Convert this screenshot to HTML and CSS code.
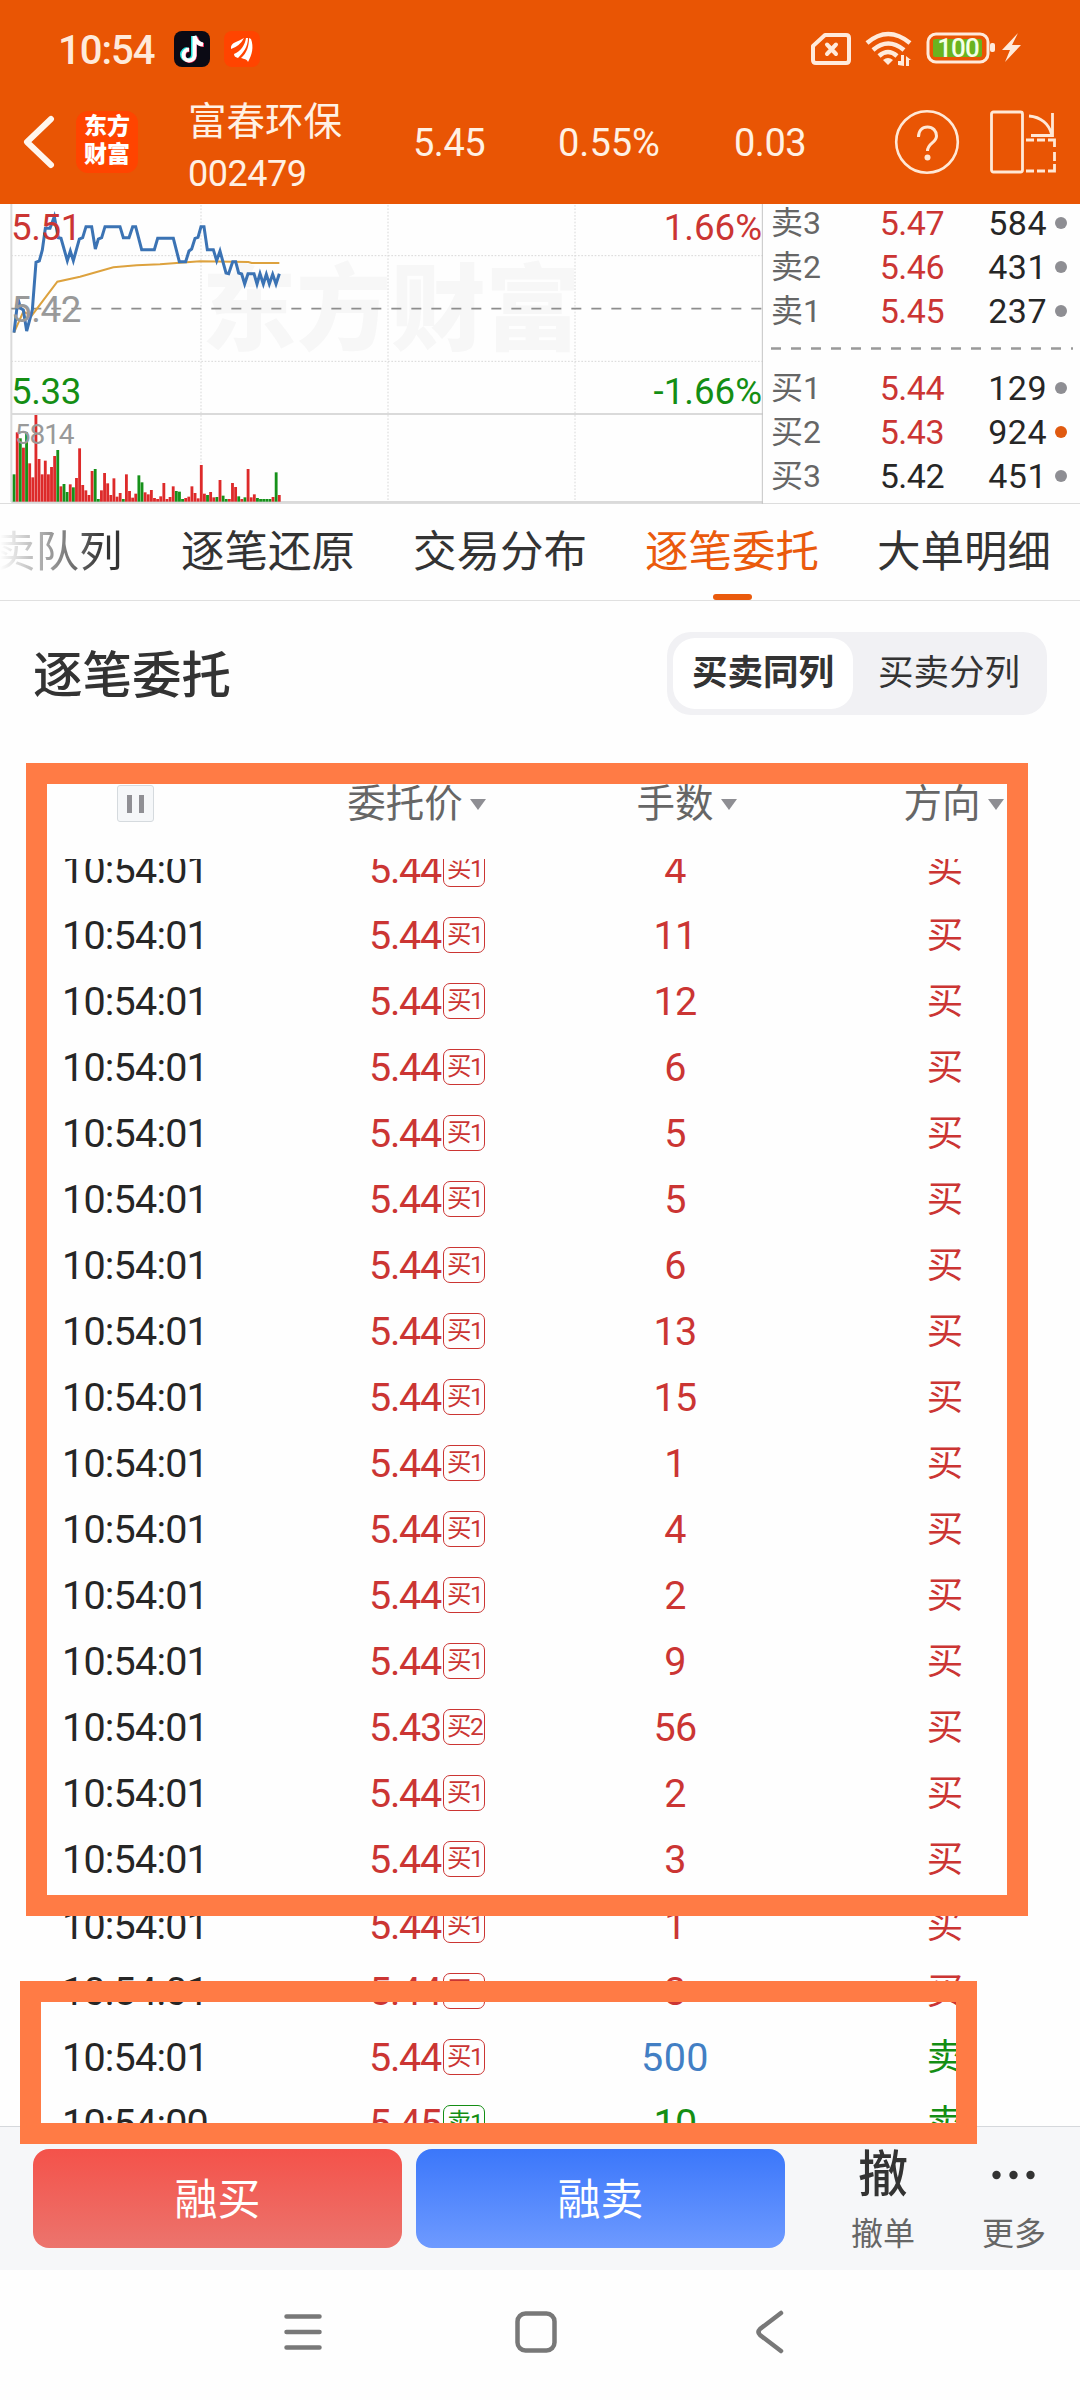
FILE: index.html
```html
<!DOCTYPE html>
<html lang="zh-CN">
  <head>
    <meta charset="UTF-8">
    <title>富春环保 002479</title>
    <link rel="stylesheet" href="styles.css">
  </head>
  <body>
    <header class="header">
      <div class="status">
        <span class="clock">10:54</span>
        <svg class="app-icon" viewBox="0 0 36 36">
          <rect width="36" height="36" rx="8" fill="#0b0a14"/>
          <path d="M19 5v19a5.500 5.500 0 1 1-5.500-6M20 5c1 5 4 8 8 8" fill="none" stroke="#25e3e0" stroke-width="4"/>
          <path d="M21 6v19a5.500 5.500 0 1 1-5.500-6M22 6c1 5 4 8 8 8" fill="none" stroke="#f5305c" stroke-width="4"/>
          <path d="M20.500 5v19.500a5.500 5.500 0 1 1-5.500-6M20.500 5c1 5 4 8 8.500 8.500" fill="none" stroke="#fff" stroke-width="4"/>
        </svg>
        <svg class="app-icon" viewBox="0 0 36 36">
          <rect width="36" height="36" rx="8" fill="#ff4400"/>
          <path d="M7 18C6 11 14 11 20 7q-4 8-13 11zM10 23c7-3 11-9 12-16l2 0c0 9-5 15-10 20-3-1-4-2-4-4zM17 27c6-5 8-12 8-20l2 1c3 8 1 16-3 23-1-3-4-3-7-4z" fill="#fff"/>
        </svg>
        <svg class="status-icons" viewBox="0 0 216 40">
          <g fill="none" stroke="#ffeadb" stroke-width="4">
            <path d="M15 6h21q3 0 3 3v22q0 3-3 3H6q-3 0-3-3V17z" stroke-linejoin="round"/>
            <path d="M17 15.500l9 9.500M26 15.500l-9 9.500" stroke-linecap="round"/>
            <path d="M57 14q21-18 43 0M63 21q15-13 31 0M69 27q9-8 18 0" stroke-width="4.500"/>
            <rect x="118" y="5" width="60" height="28" rx="8" stroke-width="3"/>
          </g>
          <path d="M73 31q5-4 10 0l-5 5z" fill="#ffeadb"/>
          <path d="M88 36v-4h3v-6h3v11zM96 37V27l5 4h-2v6z" fill="#ffeadb"/>
          <rect x="123" y="10" width="49" height="18" rx="2" fill="#6ab31f"/>
          <rect x="180" y="14" width="5" height="9" rx="2" fill="#ffeadb"/>
          <path d="M208 4l-16 17h8l-5 12 16-17h-9z" fill="#ffeadb"/>
          <text x="148" y="28" class="battery-text">100</text>
        </svg>
      </div>
      <div class="title-bar">
        <svg class="back" viewBox="0 0 34 54"><path d="M29 4L5 27l24 23" fill="none" stroke="#fff6ee" stroke-width="6" stroke-linecap="round" stroke-linejoin="round"/></svg>
        <div class="logo">东方<br>财富</div>
        <div class="stock">
          <div class="stock-name">富春环保</div>
          <div class="stock-code">002479</div>
        </div>
        <span class="quote price">5.45</span>
        <span class="quote percent">0.55%</span>
        <span class="quote change">0.03</span>
        <svg class="help" viewBox="0 0 66 66">
          <circle cx="33" cy="33" r="30.800" fill="none" stroke="#ffe8d6" stroke-width="2.600"/>
          <path d="M24.500 28c0-6 3.500-10 9-10s9 4 9 9c0 7-9 7-9 15" fill="none" stroke="#ffe8d6" stroke-width="3"/>
          <circle cx="33.500" cy="48.500" r="3" fill="#ffe8d6"/>
        </svg>
        <svg class="rotate" viewBox="0 0 68 66" fill="none" stroke="#ffe8d6" stroke-width="2.800">
          <rect x="1.500" y="3" width="31" height="60" rx="2"/>
          <path d="M39 7c12 1 20 8 22.500 18M62.500 4v22.500H41"/>
          <path d="M36 31h8M47 31h8M58 31h6.500v7M64.500 43v9M64.500 55v7H58M36 62h8M47 62h8"/>
        </svg>
      </div>
    </header>

    <section class="market">
      <svg class="chart" viewBox="0 27 2289 900">
        <text class="watermark" x="605" y="443">东方财富</text>
        <g class="grid">
          <path d="M34 182H2289M34 499H2289M603 30V918M1164 30V918M1725 30V918"/>
        </g>
        <path class="frame-line" d="M34 27V921M34 657H2289M34 921H2289"/>
        <path class="edge-line" d="M2287 27V927"/>
        <path class="mid-line" d="M34 341H2289"/>
        <g id="volume"></g>
        <text class="volume-text" x="44" y="746">5814</text>
        <polyline class="average" points="42,413 70,350 95,362 172,260 240,245 340,217 410,211 480,208 540,203 600,199 745,201 755,204 838,204"/>
        <polyline class="minute" points="42,413 54,312 62,340 70,345 80,408 97,345 108,202 118,198 127,165 136,100 150,100 163,65 175,128 183,130 202,197 211,168 220,197 238,132 248,128 258,95 275,95 286,162 295,132 305,128 315,95 360,95 370,128 387,128 398,95 407,95 425,164 463,164 473,130 520,130 538,200 557,200 567,168 575,162 585,130 594,127 603,95 612,95 622,164 640,164 650,197 660,168 678,234 686,236 698,200 707,200 716,234 725,237 734,267 744,236 762,236 771,267 780,236 790,267 799,238 808,267 818,238 828,267 838,236"/>
        <text class="chart-text up" x="33" y="135">5.51</text>
        <text class="chart-text flat" x="33" y="380">5.42</text>
        <text class="chart-text down" x="33" y="627">5.33</text>
        <text class="chart-text up end" x="2286" y="135">1.66%</text>
        <text class="chart-text down end" x="2286" y="627">-1.66%</text>
      </svg>
      <div class="book">
        <div class="level"><span>卖3</span><b class="up">5.47</b><i>584</i><em></em></div>
        <div class="level"><span>卖2</span><b class="up">5.46</b><i>431</i><em></em></div>
        <div class="level"><span>卖1</span><b class="up">5.45</b><i>237</i><em></em></div>
        <svg class="book-line" viewBox="0 0 302 33"><path d="M0 15.500H302" stroke="#999" stroke-width="2.500" stroke-dasharray="10 10"/></svg>
        <div class="level"><span>买1</span><b class="up">5.44</b><i>129</i><em></em></div>
        <div class="level"><span>买2</span><b class="up">5.43</b><i>924</i><em class="hot"></em></div>
        <div class="level"><span>买3</span><b>5.42</b><i>451</i><em></em></div>
      </div>
    </section>

    <nav class="tabs">
      <a class="faded">卖队列</a>
      <a>逐笔还原</a>
      <a>交易分布</a>
      <a class="active">逐笔委托</a>
      <a>大单明细</a>
    </nav>

    <div class="section-head">
      <h2>逐笔委托</h2>
      <div class="switch">
        <span class="on">买卖同列</span>
        <span>买卖分列</span>
      </div>
    </div>

    <div class="table-head">
      <div><span class="pause"></span></div>
      <div><span class="sort">委托价</span></div>
      <div><span class="sort">手数</span></div>
      <div><span class="sort direction">方向</span></div>
    </div>
    <div class="list"><div id="rows"></div></div>

    <div class="actions">
      <button class="buy">融买</button>
      <button class="sell">融卖</button>
      <div class="action cancel"><strong>撤</strong><span>撤单</span></div>
      <div class="action more">
        <svg viewBox="0 0 44 50"><circle cx="4.500" cy="25" r="4.200"/><circle cx="21.500" cy="25" r="4.200"/><circle cx="38.500" cy="25" r="4.200"/></svg>
        <span>更多</span>
      </div>
    </div>

    <div class="system-nav">
      <svg viewBox="0 0 44 44"><path d="M5.500 6.500h33M5.500 22h33M5.500 37.500h33"/></svg>
      <svg viewBox="0 0 44 44"><rect x="3.500" y="3.500" width="37" height="37" rx="8"/></svg>
      <svg viewBox="0 0 44 44"><path d="M34 3L13 19q-3 3 0 6l21 16"/></svg>
    </div>

    <div class="mark mark-top"></div>
    <div class="mark mark-bottom"></div>
    <script src="script.js"></script>
  </body>
</html>
```
FILE: styles.css
```css
body {
  margin: 0;
  width: 1080px;
  height: 2400px;
  position: relative;
  overflow: hidden;
  background: #fefefe;
  color: #262626;
  font-family: Roboto, "Noto Sans CJK SC", sans-serif;
}

.header {
  height: 204px;
  background: #e95504;
  color: #fff1e4;
}

.status {
  display: flex;
  align-items: center;
  height: 98px;
  padding-left: 58px;
}

.clock {
  width: 116px;
  padding-top: 2px;
  font-size: 40px;
  font-weight: 500;
  letter-spacing: -1px;
  color: #ffeadb;
}

.app-icon {
  width: 36px;
  height: 36px;
  margin-right: 14px;
}

.status-icons {
  width: 216px;
  height: 40px;
  margin-left: 536px;
}

.battery-text {
  font-size: 26px;
  font-weight: 500;
  letter-spacing: -1px;
  fill: #f4ffe6;
  text-anchor: middle;
}

.title-bar {
  display: flex;
  align-items: center;
  height: 88px;
}

.back {
  width: 34px;
  height: 54px;
  margin-left: 22px;
}

.logo {
  width: 62px;
  height: 62px;
  margin-left: 20px;
  border-radius: 12px;
  background: #ff4400;
  box-sizing: border-box;
  padding-top: 2px;
  color: #fff;
  font-size: 23px;
  font-weight: 900;
  line-height: 28px;
  text-align: center;
}

.stock {
  width: 225px;
  margin-left: 50px;
  padding-top: 11px;
}

.stock-name {
  font-size: 38.5px;
  line-height: 52px;
}

.stock-code {
  font-size: 36px;
  line-height: 52px;
  letter-spacing: -0.5px;
}

.quote {
  padding-top: 2px;
  font-size: 38px;
  letter-spacing: -0.5px;
}

.price {
  width: 145px;
}

.percent {
  width: 176px;
  letter-spacing: 0;
}

.change {
  width: 160px;
}

.help {
  width: 66px;
  height: 66px;
}

.rotate {
  width: 68px;
  height: 66px;
  margin-left: 30px;
}

.up {
  color: #cb3533;
  fill: #cb3533;
}

.down {
  color: #148e14;
  fill: #148e14;
}

.flat {
  fill: #999;
}

.market {
  display: flex;
  height: 299px;
  border-bottom: 1px solid #ddd;
}

.chart {
  width: 763px;
  height: 300px;
}

.grid {
  fill: none;
  stroke: #d8d8d8;
  stroke-width: 3;
  stroke-dasharray: 5 5;
}

.frame-line {
  fill: none;
  stroke: #dadada;
  stroke-width: 6;
}

.edge-line {
  stroke: #c4c4c4;
  stroke-width: 3;
}

.mid-line {
  stroke: #8d8d8d;
  stroke-width: 5;
  stroke-dasharray: 30 30;
}

.minute {
  fill: none;
  stroke: #3b73b4;
  stroke-width: 9;
}

.average {
  fill: none;
  stroke: #dda23e;
  stroke-width: 6;
}

.watermark {
  font-family: "Noto Sans CJK SC", sans-serif;
  font-size: 284px;
  font-weight: 900;
  fill: #f7f7f7;
}

.chart-text {
  font-size: 110px;
  letter-spacing: -1px;
}

.end {
  text-anchor: end;
  letter-spacing: 0;
}

.volume-text {
  font-size: 84px;
  letter-spacing: -3px;
  fill: #999;
}

.book {
  width: 302px;
  padding-left: 8px;
  margin-top: -3px;
}

.level {
  display: flex;
  align-items: center;
  height: 44px;
  font-size: 34px;
  line-height: 44px;
}

.level span {
  width: 74px;
  color: #666;
  font-size: 32px;
}

.level b {
  width: 99px;
  font-weight: normal;
  text-align: right;
  letter-spacing: -0.5px;
}

.level i {
  width: 103px;
  font-style: normal;
  text-align: right;
  letter-spacing: 0.5px;
}

.level em {
  width: 12px;
  height: 12px;
  margin-left: 8px;
  border-radius: 50%;
  background: #8e8e93;
}

.level em.hot {
  background: #e05a10;
}

.book-line {
  display: block;
  width: 302px;
  height: 33px;
}

.tabs {
  display: flex;
  height: 96px;
  margin-left: -8px;
  border-bottom: 1px solid #e0e0e0;
  white-space: nowrap;
}

.tabs a {
  position: relative;
  flex: none;
  width: 232px;
  font-size: 43.5px;
  line-height: 98px;
  color: #333;
}

.tabs a.faded {
  width: 189px;
  color: transparent;
  background: linear-gradient(90deg, #fefefe 8px, #333 112px);
  -webkit-background-clip: text;
  background-clip: text;
}

.tabs a.active {
  color: #ea5a0c;
}

.tabs a.active::after {
  content: "";
  position: absolute;
  left: 68px;
  bottom: 0;
  width: 39px;
  height: 6px;
  border-radius: 3px;
  background: #ea5a0c;
}

.section-head {
  display: flex;
  align-items: center;
  justify-content: space-between;
  height: 145px;
  padding: 0 33px;
}

.section-head h2 {
  margin: 0;
  padding-bottom: 5px;
  font-size: 49.5px;
  font-weight: 500;
  color: #333;
}

.switch {
  display: flex;
  box-sizing: border-box;
  width: 380px;
  height: 83px;
  padding: 6px;
  border-radius: 24px;
  background: #f1f1f4;
  font-size: 35.5px;
  line-height: 71px;
  text-align: center;
  color: #333;
}

.switch span {
  flex: 1;
  padding-left: 4px;
}

.switch .on {
  flex: none;
  width: 180px;
  padding: 0;
  border-radius: 22px;
  background: #fff;
  font-weight: 700;
}

.table-head {
  display: grid;
  grid-template-columns: repeat(4, 270px);
  height: 75px;
  margin-top: 38px;
  line-height: 40px;
  font-size: 38.5px;
  text-align: center;
  color: #666;
}

.pause {
  display: flex;
  justify-content: center;
  align-items: center;
  gap: 7px;
  box-sizing: border-box;
  width: 37px;
  height: 37px;
  margin: 1px auto 0;
  border: 1px solid #d5dade;
  border-radius: 3px;
  background: #f5f7f9;
}

.pause::before,
.pause::after {
  content: "";
  width: 5px;
  height: 18px;
  background: #8f8f94;
}

.sort {
  position: relative;
}

.sort::after {
  content: "";
  position: absolute;
  left: 100%;
  top: 18px;
  margin-left: 7px;
  border: 8.5px solid transparent;
  border-top: 11px solid #8e8e93;
  border-bottom: 0;
}

.direction {
  left: -3px;
}

.list {
  height: 1267px;
  overflow: hidden;
}

#rows {
  margin-top: -23px;
}

.row {
  display: grid;
  grid-template-columns: repeat(4, 270px);
  height: 66px;
  line-height: 67px;
  font-size: 39.5px;
  letter-spacing: -0.8px;
  text-align: center;
}

.row .side {
  font-size: 36.5px;
  letter-spacing: 0;
}

.order-price {
  position: relative;
  color: #cb3533;
  letter-spacing: -1.2px;
}

.tag {
  position: absolute;
  left: 100%;
  top: 5px;
  margin-left: 2px;
  padding: 0 2px 0 3px;
  height: 34px;
  border: 1px solid;
  border-radius: 7px;
  font-size: 24.5px;
  line-height: 34px;
  letter-spacing: -1.5px;
  white-space: nowrap;
}

.lots-big {
  color: #427fc4;
  letter-spacing: 0.5px;
}

.actions {
  display: flex;
  box-sizing: border-box;
  height: 144px;
  padding: 22px 0 0 33px;
  border-top: 1px solid #d5d8dc;
  background: #f6f7f9;
}

.actions button {
  width: 369px;
  height: 99px;
  margin: 0 14px 0 0;
  padding: 0 0 6px;
  border: none;
  border-radius: 16px;
  color: #fff;
  font-family: inherit;
  font-size: 43px;
}

.buy {
  background: linear-gradient(#f4524a, #ec746d);
}

.sell {
  background: linear-gradient(#3b77fa, #6e9aff);
}

.action {
  display: flex;
  flex-direction: column;
  align-items: center;
  box-sizing: border-box;
  width: 130px;
  padding-top: 1px;
  font-size: 32px;
  color: #666;
}

.cancel {
  margin-left: 19px;
}

.more {
  padding-left: 2px;
}

.action strong {
  height: 62px;
  font-size: 50px;
  font-weight: 500;
  line-height: 50px;
  color: #333;
}

.action svg {
  width: 44px;
  height: 50px;
  margin-bottom: 12px;
  fill: #333;
}

.action span {
  line-height: 44px;
}

.system-nav {
  display: flex;
  align-items: center;
  gap: 189px;
  height: 124px;
  padding-left: 281px;
}

.system-nav svg {
  width: 44px;
  height: 44px;
  fill: none;
  stroke: #787878;
  stroke-width: 4.5;
  stroke-linecap: round;
}

/* highlight boxes over the list */
.mark {
  position: absolute;
  box-sizing: border-box;
  border: 21px solid #ff7b45;
}

.mark-top {
  left: 26px;
  top: 763px;
  width: 1002px;
  height: 1153px;
}

.mark-bottom {
  left: 20px;
  top: 1981px;
  width: 957px;
  height: 163px;
}
```
FILE: script.js
```javascript
// [time, price, level, lots, side]
var orders = [
  ['10:54:01', '5.44', '买1', 4, '买'],
  ['10:54:01', '5.44', '买1', 11, '买'],
  ['10:54:01', '5.44', '买1', 12, '买'],
  ['10:54:01', '5.44', '买1', 6, '买'],
  ['10:54:01', '5.44', '买1', 5, '买'],
  ['10:54:01', '5.44', '买1', 5, '买'],
  ['10:54:01', '5.44', '买1', 6, '买'],
  ['10:54:01', '5.44', '买1', 13, '买'],
  ['10:54:01', '5.44', '买1', 15, '买'],
  ['10:54:01', '5.44', '买1', 1, '买'],
  ['10:54:01', '5.44', '买1', 4, '买'],
  ['10:54:01', '5.44', '买1', 2, '买'],
  ['10:54:01', '5.44', '买1', 9, '买'],
  ['10:54:01', '5.43', '买2', 56, '买'],
  ['10:54:01', '5.44', '买1', 2, '买'],
  ['10:54:01', '5.44', '买1', 3, '买'],
  ['10:54:01', '5.44', '买1', 1, '买'],
  ['10:54:01', '5.44', '买1', 3, '买'],
  ['10:54:01', '5.44', '买1', 500, '卖'],
  ['10:54:00', '5.45', '卖1', 10, '卖']
];

var html = '';
orders.forEach(function (o) {
  var side = o[4] === '买' ? 'up' : 'down';
  var lots = o[3] >= 500 ? 'lots-big' : side;
  var tag = o[2][0] === '买' ? 'up' : 'down';
  html += '<div class="row"><span>' + o[0] + '</span>' +
    '<span><span class="order-price">' + o[1] + '<span class="tag ' + tag + '">' + o[2] + '</span></span></span>' +
    '<span class="' + lots + '">' + o[3] + '</span>' +
    '<span class="side ' + side + '">' + o[4] + '</span></div>';
});
document.getElementById('rows').innerHTML = html;

// volume bar heights, negative = falling minute
var volume = [-82, 208, -190, 162, -208, 115, 73, 260, 128, 82, 123, 82, 104, 137, -155, 46, -53, -29, 52, -43,
  71, 160, 50, 34, 20, 92, -98, -8, 34, 86, 55, 20, 70, 15, 26, -8, 82, 32, 12, 24,
  -79, -58, 28, 22, 35, 11, 8, 16, 56, 8, 14, 46, -32, -30, -8, 11, 15, 46, 26, 10,
  110, 24, -20, 29, 13, -14, 65, -18, -8, 8, 56, 44, -16, 8, -13, 98, 13, 22, -11, -8,
  -8, -8, -8, 14, -88, 20];

var bars = '';
volume.forEach(function (v, i) {
  var h = Math.abs(v);
  bars += '<rect x="' + (38 + i * 9.36) + '" y="' + (920 - h) + '" width="8.5" height="' + h + '" fill="' + (v < 0 ? '#16911a' : '#dd2a2a') + '"/>';
});
document.getElementById('volume').innerHTML = bars;
```
